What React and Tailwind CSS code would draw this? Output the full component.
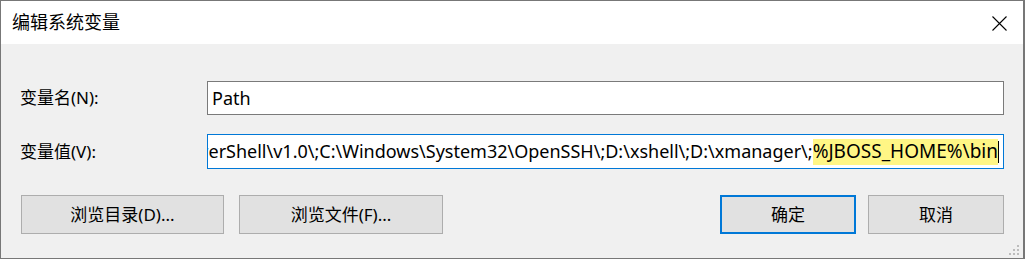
const font = { fontFamily: '"Noto Sans", "Noto Sans CJK SC", sans-serif' }

const Button = ({ children, primary, className = '' }) => (
  <button
    className={`h-[39px] bg-[#e1e1e1] text-[17px] text-black flex items-center justify-center ${
      primary ? 'border-2 border-[#0078d7]' : 'border border-[#adadad]'
    } ${className}`}
  >
    {children}
  </button>
)

export default function App() {
  // only the tail of the path fits; the start scrolls off to the left
  const value = 'PowerShell\\v1.0\\;C:\\Windows\\System32\\OpenSSH\\;D:\\xshell\\;D:\\xmanager\\;'

  return (
    <div style={font} className="w-[1025px] h-[259px] border border-r-2 border-[#777777] bg-[#f0f0f0] flex flex-col relative overflow-hidden">
      {/* Title bar */}
      <div className="h-[43px] bg-white flex items-center justify-between pl-[11px] pr-[16px]">
        <span className="text-[18px] text-black">编辑系统变量</span>
        <svg width="15" height="15" viewBox="0 0 15 15" className="mt-[1px]">
          <path d="M0.5 0.5 L14.5 14.5 M14.5 0.5 L0.5 14.5" stroke="#000" strokeWidth="1.1" fill="none" />
        </svg>
      </div>

      {/* Fields */}
      <div className="pt-[37px] pl-[19px] grid grid-cols-[187px_797px] gap-y-[19px] items-center">
        <label className="text-[17px] text-black">变量名(N):</label>
        <div className="h-[34px] bg-white border border-[#7a7a7a] flex items-center pl-[4px] text-[18px] text-black">
          Path
        </div>

        <label className="text-[17px] text-black">变量值(V):</label>
        <div className="h-[35px] bg-white border border-[#0078d7] flex items-center justify-end overflow-hidden pr-[4px] text-[18px] text-black whitespace-nowrap">
          <span className="shrink-0">{value}</span>
          <span className="shrink-0 bg-[#fff685] h-[26px] flex items-center text-[19px]">%JBOSS_HOME%\bin</span>
          <span className="shrink-0 w-px h-[22px] bg-black" />
        </div>
      </div>

      {/* Buttons */}
      <div className="mt-[26px] flex items-center justify-between pl-[20px] pr-[19px]">
        <div className="flex gap-[15px]">
          <Button className="w-[203px]">浏览目录(D)...</Button>
          <Button className="w-[204px]">浏览文件(F)...</Button>
        </div>
        <div className="flex gap-[12px]">
          <Button primary className="w-[136px]">确定</Button>
          <Button className="w-[136px]">取消</Button>
        </div>
      </div>

      {/* Resize grip */}
      <div className="absolute right-[4px] bottom-[3px] grid grid-cols-3 gap-[2px]">
        <span className="w-[2px] h-[2px]" />
        <span className="w-[2px] h-[2px]" />
        <span className="w-[2px] h-[2px] bg-[#bcbcbc]" />
        <span className="w-[2px] h-[2px]" />
        <span className="w-[2px] h-[2px] bg-[#bcbcbc]" />
        <span className="w-[2px] h-[2px] bg-[#bcbcbc]" />
        <span className="w-[2px] h-[2px] bg-[#bcbcbc]" />
        <span className="w-[2px] h-[2px] bg-[#bcbcbc]" />
        <span className="w-[2px] h-[2px] bg-[#bcbcbc]" />
      </div>
    </div>
  )
}
